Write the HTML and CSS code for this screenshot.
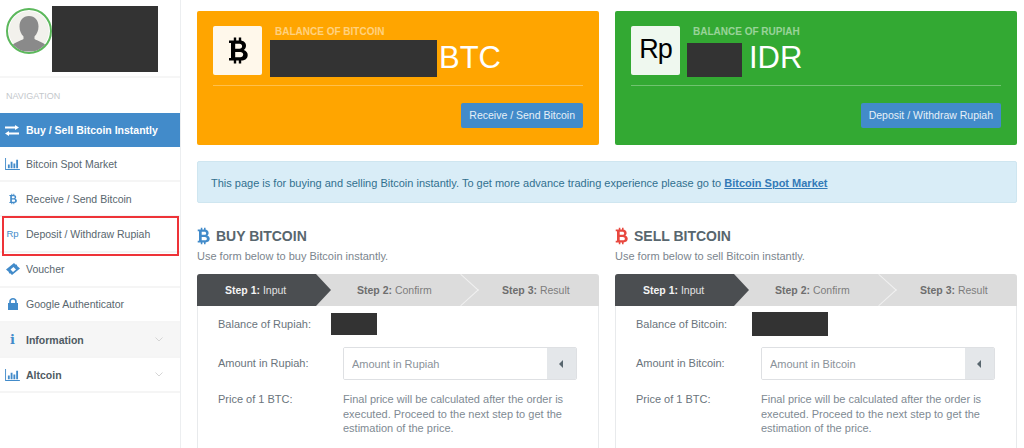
FILE: index.html
```html
<!DOCTYPE html>
<html lang="en">
<head>
<meta charset="utf-8">
<title>Buy / Sell Bitcoin Instantly</title>
<link rel="stylesheet" href="styles.css">
</head>
<body>
<svg class="defs" width="0" height="0" aria-hidden="true">
  <symbol id="btc" viewBox="0 0 20 28">
    <path d="M7 1v4M12 1v4M7 23v4M12 23v4" fill="none" stroke="currentColor" stroke-width="2.4"/>
    <path fill-rule="evenodd" fill="currentColor" d="M1 4h11c3.600 0 6 2.200 6 5.200 0 1.900-.9 3.400-2.300 4.200 2.500.8 4 2.600 4 5 0 3.600-2.800 5.600-6.700 5.600H1v-2.600h2V6.600H1zM7.200 7.200v5h4.300c1.600 0 2.600-1 2.600-2.500s-1-2.500-2.600-2.500zM7.200 15.400v5.400h5c1.800 0 3-1.100 3-2.700s-1.200-2.700-3-2.700z"/>
  </symbol>
  <symbol id="bars" viewBox="0 0 16 13">
    <path fill="currentColor" d="M0 0h1v12h15v1H0zM3 7h2v4H3zM6 4h2v7H6zM9 6h2v5H9zM12 2h2v9h-2z"/>
  </symbol>
</svg>
<div class="layout">
  <aside class="sidebar">
    <div class="profile">
      <div class="avatar">
        <svg viewBox="0 0 40 40" width="40" height="40"><path fill="#8a8a8a" d="M20 4c6 0 9.500 4.500 9.500 10.500 0 4-1.500 7.500-4 10v2.500c3 2 8.500 3 11.500 6.500-4 4-10 6-17 6s-13-2-17-6c3-3.500 8.500-4.500 11.500-6.500v-2.500c-2.500-2.500-4-6-4-10C10.500 8.500 14 4 20 4z"/></svg>
      </div>
      <div class="redact redact-profile"></div>
    </div>
    <div class="nav-title">NAVIGATION</div>
    <nav class="nav">
      <a class="nav-item active"><span class="ico"><svg viewBox="0 0 14 11" width="14" height="11"><path fill="currentColor" d="M10 0l4 2.500L10 5V3.400H0V1.600h10zM4 6v1.600h10v1.800H4V11L0 8.500z"/></svg></span>Buy / Sell Bitcoin Instantly</a>
      <a class="nav-item"><span class="ico"><svg width="15" height="12"><use href="#bars"/></svg></span>Bitcoin Spot Market</a>
      <a class="nav-item"><span class="ico"><svg width="8" height="12"><use href="#btc"/></svg></span>Receive / Send Bitcoin</a>
      <a class="nav-item marked"><span class="ico ico-rp">Rp</span>Deposit / Withdraw Rupiah</a>
      <a class="nav-item"><span class="ico"><svg viewBox="0 0 14 12" width="14" height="12"><path fill="currentColor" fill-rule="evenodd" d="M0 6.500L8 0l1.500 1.500c.4-.2.900-.1 1.300.3.400.4.500.9.300 1.300L14 5.500 6 12l-1.500-1.500c-.5.200-1 .1-1.300-.3-.4-.4-.5-.9-.3-1.300zM4.500 6.500l2.500 2.500 3-2.500L7.500 4z"/></svg></span>Voucher</a>
      <a class="nav-item"><span class="ico"><svg viewBox="0 0 10 12" width="10" height="12"><path fill="currentColor" fill-rule="evenodd" d="M0 5h1.200V3.500C1.200 1.400 2.900 0 5 0s3.800 1.400 3.800 3.500V5H10v7H0zM2.900 5h4.200V3.500C7.100 2.400 6.200 1.600 5 1.600s-2.100.8-2.100 1.900z"/></svg></span>Google Authenticator</a>
      <a class="nav-item shaded strong"><span class="ico ico-info">i</span>Information<svg class="chev" viewBox="0 0 8 5" width="8" height="5"><path d="M.5.500L4 4 7.500.500" fill="none" stroke="#d5d5d5"/></svg></a>
      <a class="nav-item strong"><span class="ico"><svg width="15" height="12"><use href="#bars"/></svg></span>Altcoin<svg class="chev" viewBox="0 0 8 5" width="8" height="5"><path d="M.5.500L4 4 7.500.500" fill="none" stroke="#d5d5d5"/></svg></a>
    </nav>
  </aside>

  <main class="main">
    <section class="cards">
      <div class="card card-orange">
        <div class="card-top">
          <div class="card-icon"><svg width="20" height="29"><use href="#btc"/></svg></div>
          <div class="card-info">
            <div class="card-label">BALANCE OF BITCOIN</div>
            <div class="card-value"><span class="redact redact-btc"></span><span class="unit">BTC</span></div>
          </div>
        </div>
        <div class="card-actions"><a class="btn">Receive / Send Bitcoin</a></div>
      </div>
      <div class="card card-green">
        <div class="card-top">
          <div class="card-icon card-icon-rp">Rp</div>
          <div class="card-info">
            <div class="card-label">BALANCE OF RUPIAH</div>
            <div class="card-value"><span class="redact redact-idr"></span><span class="unit unit-idr">IDR</span></div>
          </div>
        </div>
        <div class="card-actions"><a class="btn">Deposit / Withdraw Rupiah</a></div>
      </div>
    </section>

    <div class="alert">This page is for buying and selling Bitcoin instantly. To get more advance trading experience please go to <a class="alert-link">Bitcoin Spot Market</a></div>

    <section class="forms">
      <div class="trade">
        <h2 class="trade-title"><svg class="title-ico blue" width="13" height="18"><use href="#btc"/></svg>BUY BITCOIN</h2>
        <p class="trade-sub">Use form below to buy Bitcoin instantly.</p>
        <div class="steps">
          <div class="step step-current"><b>Step 1:</b> Input</div>
          <div class="step step-two"><b>Step 2:</b> Confirm</div>
          <div class="step step-three"><b>Step 3:</b> Result</div>
        </div>
        <div class="panel">
          <div class="row row-balance"><span class="label">Balance of Rupiah:</span><span class="redact redact-rupiah"></span></div>
          <div class="row row-amount"><span class="label">Amount in Rupiah:</span>
            <div class="input-group"><input class="input" placeholder="Amount in Rupiah"><span class="addon"></span></div>
          </div>
          <div class="row row-price"><span class="label">Price of 1 BTC:</span>
            <p class="note">Final price will be calculated after the order is executed. Proceed to the next step to get the estimation of the price.</p>
          </div>
        </div>
      </div>
      <div class="trade">
        <h2 class="trade-title"><svg class="title-ico red" width="13" height="18"><use href="#btc"/></svg>SELL BITCOIN</h2>
        <p class="trade-sub">Use form below to sell Bitcoin instantly.</p>
        <div class="steps">
          <div class="step step-current"><b>Step 1:</b> Input</div>
          <div class="step step-two"><b>Step 2:</b> Confirm</div>
          <div class="step step-three"><b>Step 3:</b> Result</div>
        </div>
        <div class="panel">
          <div class="row row-balance"><span class="label">Balance of Bitcoin:</span><span class="redact redact-bitcoin"></span></div>
          <div class="row row-amount"><span class="label">Amount in Bitcoin:</span>
            <div class="input-group"><input class="input" placeholder="Amount in Bitcoin"><span class="addon"></span></div>
          </div>
          <div class="row row-price"><span class="label">Price of 1 BTC:</span>
            <p class="note">Final price will be calculated after the order is executed. Proceed to the next step to get the estimation of the price.</p>
          </div>
        </div>
      </div>
    </section>
  </main>
</div>
</body>
</html>
```

FILE: styles.css
```css
* { box-sizing: border-box; }
html, body { margin: 0; height: 448px; overflow: hidden; background: #fff; }
body { font-family: "Liberation Sans", Arial, sans-serif; font-size: 11px; color: #58666e; }
.defs { position: absolute; }
.layout { display: flex; height: 448px; }
.redact { display: block; background: #333; flex: none; }

/* Sidebar */
.sidebar { width: 181px; flex: none; border-right: 1px solid #eceef0; }
.profile { display: flex; height: 78px; padding: 6px 0 0 6px; border-bottom: 2px solid #f6f6f6; }
.avatar { width: 46px; height: 46px; margin-top: 2px; border: 2px solid #5cb85c; border-radius: 50%; background: #f2f1ec; box-shadow: inset 0 0 0 1px #fff; overflow: hidden; display: flex; justify-content: center; align-items: flex-end; flex: none; }
.redact-profile { width: 106px; height: 66px; }
.nav-title { height: 35px; padding: 12px 0 0 6px; font-size: 9px; line-height: 12px; color: #c4c8cc; }
.nav { display: flex; flex-direction: column; }
.nav-item { position: relative; display: flex; align-items: center; height: 35.2px; padding-left: 26px; font-size: 10.5px; color: #58666e; border-bottom: 2px solid #f5f5f5; }
.nav-item.active { height: 34px; background: #428bca; color: #fff; font-weight: bold; border-bottom: 0; }
.nav-item.shaded { background: #f6f6f6; }
.nav-item.strong { color: #4f5a62; font-weight: bold; }
.nav-item.marked::after { content: ""; position: absolute; left: 2px; top: -1px; width: 173px; height: 36px; border: 2px solid #ee3338; }
.ico { position: absolute; left: 0; top: 0; bottom: 0; width: 25px; display: flex; align-items: center; justify-content: center; color: #428bca; }
.active .ico { color: #fff; left: -1px; }
.ico-rp { font-size: 9.5px; font-weight: normal; }
.ico-info { font-family: "DejaVu Serif", serif; font-size: 13px; font-weight: bold; }
.chev { position: absolute; left: 155px; top: 14px; }

/* Main */
.main { flex: 1; min-width: 0; padding: 11px 7px 0 16px; }
.cards { display: grid; grid-template-columns: 402px 402px; gap: 16px; }
.card { height: 134px; padding: 15px 16px 0; border-radius: 2px; color: #fff; }
.card-orange { background: #ffa500; }
.card-green { background: #33a933; }
.card-top { display: flex; height: 60px; border-bottom: 1px solid rgba(255, 255, 255, .3); }
.card-icon { width: 49px; height: 49px; border-radius: 2px; background: rgba(255, 255, 255, .92); color: #000; display: flex; align-items: center; justify-content: center; }
.card-icon-rp { font-size: 27px; letter-spacing: -1px; padding-bottom: 3px; }
.card-info { flex: 1; padding: 0 0 0 8px; }
.card-label { padding-left: 5px; font-size: 10px; font-weight: bold; line-height: 12px; color: rgba(255, 255, 255, .5); }
.card-green .card-label { font-weight: bold; }
.card-value { display: flex; align-items: center; height: 38px; margin-top: 1px; }
.unit { font-size: 31px; margin-left: 2px; line-height: 38px; }
.unit-idr { margin-left: 7px; }
.redact-btc { width: 167px; height: 37px; }
.redact-idr { width: 55px; height: 34px; margin: 4px 0 0 -1px; }
.card-actions { display: flex; justify-content: flex-end; margin-top: 17px; }
.btn { display: block; height: 25px; padding: 0 8px; line-height: 25px; font-size: 10.5px; background: #428bca; color: #e6f0f8; border-radius: 2px; }

.alert { height: 42px; margin-top: 16px; width: 820px; padding: 0 13px; line-height: 42px; font-size: 11px; background: #d9edf7; border: 1px solid #cfe6f0; border-radius: 2px; color: #31708f; white-space: nowrap; }
.alert-link { font-weight: bold; color: #337ab7; text-decoration: underline; }

.forms { display: grid; grid-template-columns: 402px 402px; gap: 16px; margin-top: 23px; }
.trade-title { display: flex; align-items: center; margin: 0; height: 20px; font-size: 14px; font-weight: bold; color: #58666e; }
.title-ico { margin-right: 6px; flex: none; }
.blue { color: #428bca; }
.red { color: #e8483f; }
.trade-sub { margin: 3px 0 0; height: 15px; line-height: 15px; font-size: 11px; color: #7b858e; }
.steps { display: flex; height: 32px; margin-top: 10px; background: #dcdcdc; border-radius: 3px 3px 0 0; overflow: hidden; line-height: 32px; color: #7c7c7c; font-size: 10.5px; }
.step { position: relative; flex: none; white-space: nowrap; }
.step b { color: #6e6e6e; }
.step-current { width: 134px; padding-left: 28px; background: #4b4e51; color: #e2e2e2; clip-path: polygon(0 0, 119px 0, 134px 16px, 119px 32px, 0 32px); }
.step-current b { color: #f4f4f4; }
.step-two { width: 146px; padding-left: 26px; }
.step-two::after { content: ""; position: absolute; right: 4px; top: 4px; width: 23px; height: 23px; border-top: 1px solid #f1f1f1; border-right: 1px solid #f1f1f1; transform: rotate(45deg) skew(-3deg, -3deg); }
.step-three { flex: 1; padding-left: 25px; }
.panel { height: 170px; padding: 7px 21px 0 20px; border: 1px solid #e8eaec; border-top: 0; }
.row { display: grid; grid-template-columns: 113px 1fr; }
.row-balance { height: 22px; align-items: center; }
.redact-rupiah { width: 46px; height: 22px; }
.redact-bitcoin { width: 76px; height: 24px; margin: -1px 0 0 3px; }
.row-amount { height: 33px; margin-top: 12px; align-items: center; }
.input-group { display: flex; height: 33px; margin-left: 12px; border: 1px solid #dee0e3; border-radius: 2px; overflow: hidden; }
.input { flex: 1; min-width: 0; border: 0; outline: 0; padding: 0 8px; font: 11px "Liberation Sans", Arial, sans-serif; color: #58666e; background: #fff; }
.input::placeholder { color: #8a929a; opacity: 1; }
.addon { position: relative; width: 29px; flex: none; background: #e4e7ea; }
.addon::after { content: ""; position: absolute; left: 12px; top: 12px; border: 4px solid transparent; border-left: 0; border-right: 4px solid #58666e; }
.row-price { margin-top: 12px; }
.label { line-height: 15px; color: #6a747c; }
.note { margin: 0 0 0 12px; line-height: 14.6px; color: #808a93; }
```
